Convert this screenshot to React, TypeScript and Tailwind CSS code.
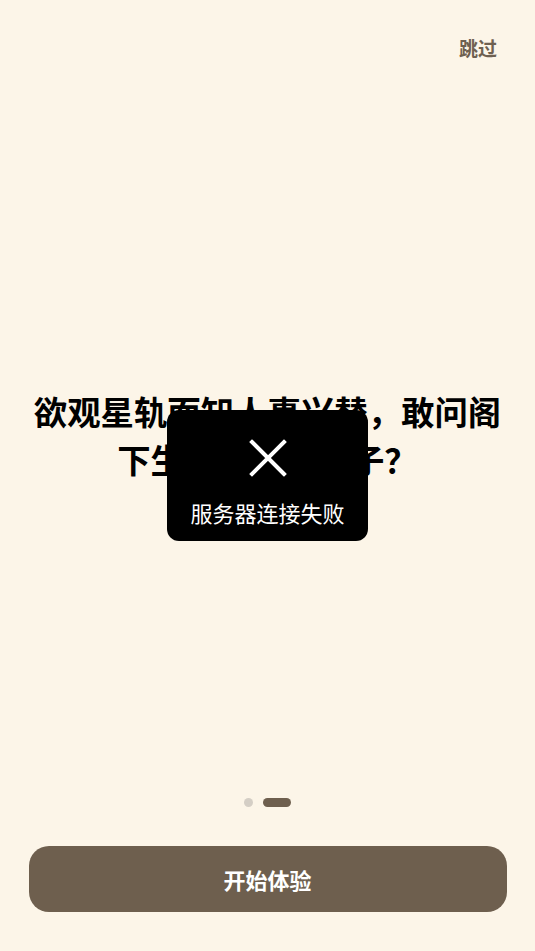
const cjk = { fontFamily: '"Noto Sans CJK SC", "Noto Sans", sans-serif' };

function Toast({ message }: { message: string }) {
  return (
    <div className="fixed inset-0 flex items-center justify-center pointer-events-none">
      <div className="w-[201px] h-[131px] rounded-[12px] bg-black flex flex-col items-center pt-[29px]">
        <svg width="38" height="38" viewBox="0 0 38 38" fill="none" stroke="white" strokeWidth="4" strokeLinecap="square">
          <path d="M3 3 L35 35 M35 3 L3 35" />
        </svg>
        <span className="mt-[21px] text-[22px] leading-[28px] text-white">{message}</span>
      </div>
    </div>
  );
}

export default function App() {
  return (
    <div className="relative h-[951px] w-full flex flex-col bg-[#fcf5e8] overflow-hidden" style={cjk}>
      <header className="h-[72px] flex justify-end items-start pt-[35px] pr-[38px]">
        <button className="text-[19px] leading-[26px] font-bold text-[#6e6050]">跳过</button>
      </header>

      <main className="flex-1 flex items-center justify-center px-[30px]">
        <h1 className="text-center text-[33.4px] leading-[48px] font-bold text-black">
          欲观星轨而知人事兴替，敢问阁下生辰是哪个日子？
        </h1>
      </main>

      <footer className="h-[153px] flex flex-col items-center">
        <div className="flex items-center gap-[10px] h-[9px]">
          <span className="w-[9px] h-[9px] rounded-full bg-[#d4cec5]" />
          <span className="w-[28px] h-[9px] rounded-full bg-[#6e5f4e]" />
        </div>
        <button className="mt-[39px] w-[478px] h-[66px] rounded-[20px] bg-[#6e5f4e] text-white text-[22px] font-bold">
          开始体验
        </button>
      </footer>

      <Toast message="服务器连接失败" />
    </div>
  );
}
